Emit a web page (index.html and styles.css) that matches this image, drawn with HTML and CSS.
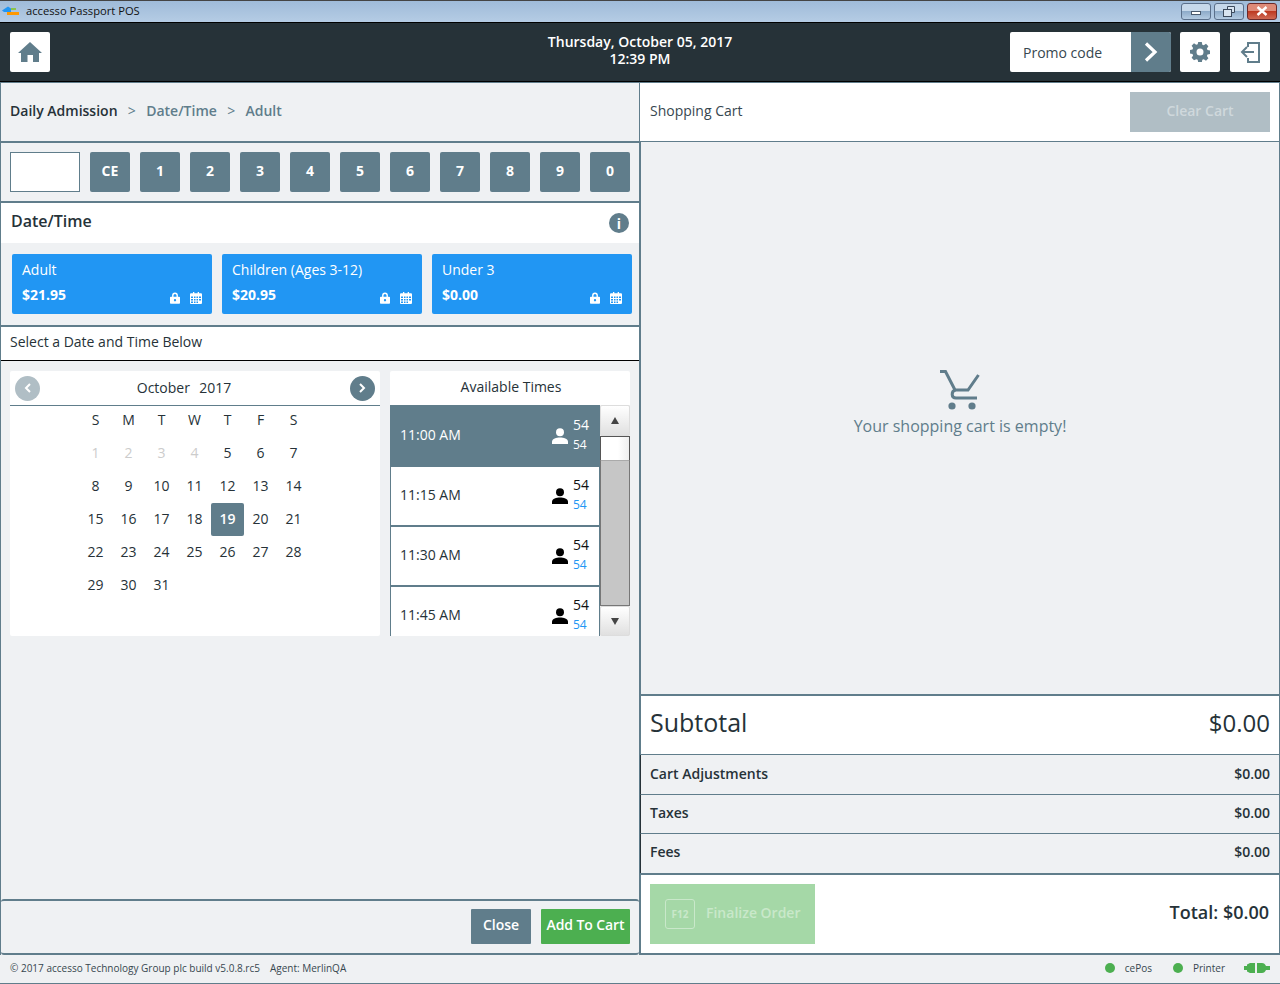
FILE: index.html
```html
<!DOCTYPE html>
<html lang="en">
<head>
    <meta charset="UTF-8">
    <title>accesso Passport POS</title>
    <link rel="stylesheet" href="styles.css">
</head>
<body>
    <svg class="defs" width="0" height="0">
        <symbol id="lock" viewBox="0 0 12 14"><path fill-rule="evenodd" d="M2.500 5.500V4a3.500 3.500 0 0 1 7 0v1.500H11a1 1 0 0 1 1 1V13a1 1 0 0 1-1 1H1a1 1 0 0 1-1-1V6.500a1 1 0 0 1 1-1zM4.200 5.500h3.600V4a1.800 1.800 0 0 0-3.600 0zM6 8.300a1.400 1.400 0 1 0 0 2.800 1.400 1.400 0 0 0 0-2.800z"/></symbol>
        <symbol id="cal" viewBox="0 0 12 12"><path fill-rule="evenodd" d="M3 0h1.300v1.300h3.400V0H9v1.300h2a1 1 0 0 1 1 1V11a1 1 0 0 1-1 1H1a1 1 0 0 1-1-1V2.300a1 1 0 0 1 1-1h2zM1 4.500v1.500h2V4.500zM4 4.500v1.500h1.500V4.500zM6.500 4.500v1.500H8V4.500zM9 4.500v1.500h2V4.500zM1 7v1.500h2V7zM4 7v1.500h1.500V7zM6.500 7v1.500H8V7zM9 7v1.500h2V7zM1 9.500V11h2V9.500zM4 9.500V11h1.500V9.500zM6.500 9.500V11H8V9.500z"/></symbol>
        <symbol id="person" viewBox="0 0 16 16"><circle cx="8" cy="4.200" r="4"/><path d="M0 16v-2.200C0 10.800 4.500 9.500 8 9.500s8 1.300 8 4.300V16z"/></symbol>
    </svg>

    <div class="titlebar">
        <svg class="app-logo" width="18" height="10" viewBox="0 0 18 10">
            <path fill="#2196f3" d="M0 4.500 3 2.500 6 0.500 9 2.500 9 6 2 6z"/>
            <rect x="9" y="2" width="5" height="2" fill="#8bc34a"/>
            <rect x="5" y="6" width="12" height="3" fill="#ff9800"/>
        </svg>
        <span class="app-name">accesso Passport POS</span>
        <div class="win-buttons">
            <span class="win-btn"><i class="win-min"></i></span>
            <span class="win-btn">
                <svg width="12" height="11" viewBox="0 0 12 11"><path d="M4.500 3V.5h7v6H8.500" fill="#d8e4f0" stroke="#3c4a5c"/><rect x=".5" y="3.500" width="8" height="7" fill="#d8e4f0" stroke="#3c4a5c"/></svg>
            </span>
            <span class="win-btn win-close">
                <svg width="12" height="10" viewBox="0 0 12 10"><path d="M1.500 1 10.500 9M10.500 1 1.500 9" stroke="#fff" stroke-width="2.400"/></svg>
            </span>
        </div>
    </div>

    <header class="topbar">
        <div class="top-side">
            <button class="icon-btn">
                <svg width="24" height="20" viewBox="0 0 24 20"><path fill="#607d8b" d="M12 0 24 11h-3v9h-6v-7H9.500v7H3v-9H0z"/></svg>
            </button>
        </div>
        <div class="clock">
            <div>Thursday, October 05, 2017</div>
            <div>12:39 PM</div>
        </div>
        <div class="top-side top-side-right">
            <div class="promo">
                <span class="promo-text">Promo code</span>
                <span class="promo-go">
                    <svg width="14" height="20" viewBox="0 0 14 20"><path d="M2 1.500 11 10 2 18.500" fill="none" stroke="#fff" stroke-width="3.200"/></svg>
                </span>
            </div>
            <button class="icon-btn gear-btn">
                <svg width="20" height="20" viewBox="0 0 20 20"><path fill="#607d8b" fill-rule="evenodd" d="M8.200 0h3.600l.5 2.700 1.500.6L16 1.800l2.400 2.500-1.500 2.200.6 1.500 2.500.5v3.500l-2.500.5-.6 1.500 1.500 2.200-2.400 2.500-2.200-1.500-1.500.6-.5 2.700H8.200l-.5-2.700-1.500-.6L4 18.200l-2.400-2.500 1.500-2.200-.6-1.500L0 11.500V8l2.500-.5.600-1.500-1.500-2.200L4 1.300l2.200 1.500 1.500-.6zM10 6.500a3.500 3.500 0 1 0 0 7 3.500 3.500 0 0 0 0-7z"/></svg>
            </button>
            <button class="icon-btn">
                <svg width="22" height="22" viewBox="0 0 22 22"><path d="M9 6V2h11v19H9v-4" fill="none" stroke="#607d8b" stroke-width="2"/><path d="M15 11H3M8 6l-5 5 5 5" fill="none" stroke="#607d8b" stroke-width="2"/></svg>
            </button>
        </div>
    </header>

    <div class="columns">
        <main class="left">
            <nav class="crumbs">
                <b>Daily Admission</b>
                <span class="sep">&gt;</span>
                <span>Date/Time</span>
                <span class="sep">&gt;</span>
                <span>Adult</span>
            </nav>

            <div class="keypad">
                <input class="qty" type="text">
                <button>CE</button>
                <button>1</button>
                <button>2</button>
                <button>3</button>
                <button>4</button>
                <button>5</button>
                <button>6</button>
                <button>7</button>
                <button>8</button>
                <button>9</button>
                <button>0</button>
            </div>

            <div class="section-head">
                <h2>Date/Time</h2>
                <span class="info">i</span>
            </div>

            <div class="tickets">
                <div class="ticket">
                    <div class="ticket-name">Adult</div>
                    <div class="ticket-row">
                        <b>$21.95</b>
                        <svg class="ic-lock"><use href="#lock"/></svg>
                        <svg class="ic-cal"><use href="#cal"/></svg>
                    </div>
                </div>
                <div class="ticket">
                    <div class="ticket-name">Children (Ages 3-12)</div>
                    <div class="ticket-row">
                        <b>$20.95</b>
                        <svg class="ic-lock"><use href="#lock"/></svg>
                        <svg class="ic-cal"><use href="#cal"/></svg>
                    </div>
                </div>
                <div class="ticket">
                    <div class="ticket-name">Under 3</div>
                    <div class="ticket-row">
                        <b>$0.00</b>
                        <svg class="ic-lock"><use href="#lock"/></svg>
                        <svg class="ic-cal"><use href="#cal"/></svg>
                    </div>
                </div>
            </div>

            <div class="prompt">Select a Date and Time Below</div>

            <div class="picker">
                <section class="calendar">
                    <div class="cal-head">
                        <span class="cal-nav off">
                            <svg width="8" height="10" viewBox="0 0 8 10"><path d="M6 1 2 5l4 4" fill="none" stroke="#fff" stroke-width="2"/></svg>
                        </span>
                        <span class="cal-title">October&nbsp; 2017</span>
                        <span class="cal-nav">
                            <svg width="8" height="10" viewBox="0 0 8 10"><path d="M2 1l4 4-4 4" fill="none" stroke="#fff" stroke-width="2"/></svg>
                        </span>
                    </div>
                    <div class="cal-grid">
                        <span>S</span><span>M</span><span>T</span><span>W</span><span>T</span><span>F</span><span>S</span>
                        <span class="past">1</span><span class="past">2</span><span class="past">3</span><span class="past">4</span><span>5</span><span>6</span><span>7</span>
                        <span>8</span><span>9</span><span>10</span><span>11</span><span>12</span><span>13</span><span>14</span>
                        <span>15</span><span>16</span><span>17</span><span>18</span><span class="today">19</span><span>20</span><span>21</span>
                        <span>22</span><span>23</span><span>24</span><span>25</span><span>26</span><span>27</span><span>28</span>
                        <span>29</span><span>30</span><span>31</span>
                    </div>
                </section>

                <section class="times">
                    <div class="times-head">Available Times</div>
                    <div class="times-body">
                        <div class="time-list">
                            <div class="slot active">
                                <span class="slot-time">11:00 AM</span>
                                <svg class="ic-person"><use href="#person"/></svg>
                                <span class="slot-nums"><span>54</span><span class="avail">54</span></span>
                            </div>
                            <div class="slot">
                                <span class="slot-time">11:15 AM</span>
                                <svg class="ic-person"><use href="#person"/></svg>
                                <span class="slot-nums"><span>54</span><span class="avail">54</span></span>
                            </div>
                            <div class="slot">
                                <span class="slot-time">11:30 AM</span>
                                <svg class="ic-person"><use href="#person"/></svg>
                                <span class="slot-nums"><span>54</span><span class="avail">54</span></span>
                            </div>
                            <div class="slot">
                                <span class="slot-time">11:45 AM</span>
                                <svg class="ic-person"><use href="#person"/></svg>
                                <span class="slot-nums"><span>54</span><span class="avail">54</span></span>
                            </div>
                        </div>
                        <div class="scroll">
                            <div class="scroll-btn"><i class="arrow-up"></i></div>
                            <div class="scroll-thumb"></div>
                            <div class="scroll-track"></div>
                            <div class="scroll-btn scroll-btn-down"><i class="arrow-down"></i></div>
                        </div>
                    </div>
                </section>
            </div>

            <div class="actions">
                <button class="btn-close">Close</button>
                <button class="btn-add">Add To Cart</button>
            </div>
        </main>

        <aside class="right">
            <div class="cart-head">
                <span>Shopping Cart</span>
                <button class="btn-clear">Clear Cart</button>
            </div>

            <div class="cart-empty">
                <svg width="42" height="41" viewBox="0 0 42 41">
                    <path d="M1 2.500h5.500L16 21h13l10.500-15" fill="none" stroke="#607d8b" stroke-width="3"/>
                    <path d="M38 29H17c-5 0-5-7-.5-8" fill="none" stroke="#607d8b" stroke-width="3"/>
                    <circle cx="13" cy="37" r="3.600" fill="#607d8b"/>
                    <circle cx="33" cy="37" r="3.600" fill="#607d8b"/>
                </svg>
                <div class="empty-text">Your shopping cart is empty!</div>
            </div>

            <div class="subtotal"><span class="sub-label">Subtotal</span><span>$0.00</span></div>
            <div class="sum-row sum-first"><span>Cart Adjustments</span><span class="sum-val">$0.00</span></div>
            <div class="sum-row"><span>Taxes</span><span class="sum-val">$0.00</span></div>
            <div class="sum-row sum-last"><span>Fees</span><span class="sum-val">$0.00</span></div>

            <div class="total-row">
                <button class="btn-finalize"><span class="key">F12</span>Finalize Order</button>
                <span class="total">Total: $0.00</span>
            </div>
        </aside>
    </div>

    <footer class="status">
        <span>© 2017 accesso Technology Group plc build v5.0.8.rc5</span>
        <span class="agent">Agent: MerlinQA</span>
        <div class="status-right">
            <i class="dot"></i><span class="dot-label">cePos</span>
            <i class="dot"></i><span class="dot-label">Printer</span>
            <svg class="plug" width="26" height="10" viewBox="0 0 26 10">
                <path fill="#4caf50" d="M0 3h3V1.500L6 0h5v10H6L3 8.500V7H0zM13 0h5c2 0 3 1 4 3h4v4h-4c-1 2-2 3-4 3h-5z"/>
            </svg>
        </div>
    </footer>
</body>
</html>
```
FILE: styles.css
```css
*{
    box-sizing: border-box;
    padding: 0px;
    margin: 0px;
}

html{
    font-family: "Open Sans", "Noto Sans", sans-serif;
}

body{
    display: flex;
    flex-direction: column;
    width: 1280px;
    height: 984px;
    overflow: hidden;
    background-color: #eff1f3;
    color: #263238;
    font-size: 14px;
}

button{
    font-family: inherit;
    border: none;
}

.defs{
    position: absolute;
}

/* window chrome */
.titlebar{
    display: flex;
    align-items: center;
    height: 23px;
    flex-shrink: 0;
    padding: 0 3px 1px 2px;
    background: linear-gradient(to bottom, #9fbbd9, #b5cce4);
    border-top: 1px solid #444;
    border-bottom: 1px solid #000;
}

.app-logo{
    margin-right: 6px;
}

.app-name{
    margin-top: -2px;
    font-size: 11.2px;
    color: #111;
}

.win-buttons{
    display: flex;
    gap: 3px;
    margin-left: auto;
}

.win-btn{
    display: flex;
    align-items: center;
    justify-content: center;
    width: 30px;
    height: 17px;
    border: 1px solid #5a6f8a;
    border-radius: 3px;
    background: linear-gradient(to bottom, #c6d8ea 50%, #8eabc9 50%, #b4cbe2);
}

.win-close{
    border-color: #6b2a2a;
    background: linear-gradient(to bottom, #dd8a78 50%, #bd3a22 50%, #cf6a54);
}

.win-min{
    display: block;
    width: 10px;
    height: 4px;
    margin-top: 4px;
    background-color: #fff;
    border: 1px solid #4a5a6e;
}

/* top bar */
.topbar{
    display: flex;
    align-items: center;
    height: 59px;
    flex-shrink: 0;
    padding: 0 10px;
    background-color: #263238;
    border-bottom: 1px solid #000;
}

.top-side{
    display: flex;
    flex: 1;
}

.top-side-right{
    justify-content: flex-end;
}

.icon-btn{
    display: flex;
    align-items: center;
    justify-content: center;
    width: 40px;
    height: 40px;
    background-color: #fff;
    border-radius: 2px;
}

.gear-btn{
    margin: 0 10px 0 9px;
}

.clock{
    margin-bottom: 4px;
    text-align: center;
    color: #fff;
    font-size: 14px;
    font-weight: 600;
    line-height: 17px;
}

.promo{
    display: flex;
    width: 161px;
    height: 40px;
    background-color: #fff;
    border-radius: 2px;
    overflow: hidden;
}

.promo-text{
    flex: 1;
    padding-left: 13px;
    line-height: 41px;
    font-size: 14px;
    color: #37474f;
}

.promo-go{
    display: flex;
    align-items: center;
    justify-content: center;
    width: 40px;
    background-color: #607d8b;
}

/* two panes */
.columns{
    display: flex;
    flex: 1;
    min-height: 0;
}

.left{
    display: flex;
    flex-direction: column;
    width: 640px;
    border-left: 1px solid #607d8b;
    border-right: 1px solid #607d8b;
    background-color: #eff1f3;
}

.right{
    display: flex;
    flex-direction: column;
    width: 640px;
    border-right: 1px solid #607d8b;
}

.crumbs{
    display: flex;
    align-items: center;
    gap: 10.3px;
    height: 61px;
    flex-shrink: 0;
    padding: 0 0 3px 9px;
    border-top: 1px solid #607d8b;
    border-bottom: 2px solid #607d8b;
    color: #607d8b;
    font-weight: 600;
    font-size: 14px;
}

.crumbs b{
    font-weight: 600;
    color: #263238;
}

.crumbs .sep{
    font-weight: 400;
    font-size: 14px;
}

.keypad{
    display: flex;
    gap: 10px;
    height: 60px;
    flex-shrink: 0;
    padding: 9px 9px;
    border-bottom: 2px solid #607d8b;
}

.keypad button{
    width: 40px;
    height: 40px;
    padding-bottom: 4px;
    background-color: #607d8b;
    color: #fff;
    font-size: 14px;
    font-weight: 700;
    border-radius: 2px;
}

.qty{
    width: 70px;
    height: 40px;
    background-color: #fff;
    border: 1px solid #607d8b;
}

.section-head{
    display: flex;
    align-items: center;
    justify-content: space-between;
    height: 40px;
    flex-shrink: 0;
    padding: 0 10px;
    background-color: #fff;
}

.section-head h2{
    margin-top: -5px;
    font-size: 16px;
    font-weight: 600;
    color: #263238;
}

.info{
    display: flex;
    align-items: center;
    justify-content: center;
    width: 20px;
    height: 20px;
    border-radius: 50%;
    background-color: #607d8b;
    color: #fff;
    font-size: 14px;
    font-weight: 700;
}

.tickets{
    display: flex;
    gap: 10px;
    height: 84px;
    flex-shrink: 0;
    padding: 11px 0 0 11px;
    border-bottom: 2px solid #607d8b;
}

.ticket{
    width: 200px;
    height: 60px;
    padding: 6px 10px 0;
    background-color: #2196f3;
    border-radius: 2px;
    color: #fff;
}

.ticket-name{
    font-size: 14px;
    line-height: 20px;
}

.ticket-row{
    display: flex;
    align-items: center;
    margin-top: 4px;
    height: 21px;
}

.ticket-row b{
    flex: 1;
    font-size: 14px;
    font-weight: 700;
}

.ic-lock{
    width: 10px;
    height: 12px;
    margin-top: 7px;
    fill: #fff;
}

.ic-cal{
    width: 12px;
    height: 12px;
    margin: 7px 0 0 10px;
    fill: #fff;
}

.prompt{
    height: 34px;
    flex-shrink: 0;
    padding-left: 9px;
    line-height: 30px;
    background-color: #fff;
    border-bottom: 1px solid #000;
    font-size: 14px;
    color: #263238;
}

.picker{
    display: flex;
    gap: 10px;
    flex: 1;
    padding: 10px 9px 0;
}

.calendar{
    width: 370px;
    height: 265px;
    background-color: #fff;
    border-radius: 2px;
}

.cal-head{
    display: flex;
    align-items: center;
    justify-content: space-between;
    height: 35px;
    padding: 0 5px 0 5px;
    border-bottom: 1px solid #607d8b;
}

.cal-title{
    margin: 0 22px 2px 0;
    font-size: 14px;
    word-spacing: 1px;
    color: #263238;
}

.cal-nav{
    display: flex;
    align-items: center;
    justify-content: center;
    width: 25px;
    height: 25px;
    border-radius: 50%;
    background-color: #607d8b;
}

.cal-nav.off{
    background-color: #b0bec5;
}

.cal-grid{
    display: grid;
    grid-template-columns: repeat(7, 33px);
    grid-auto-rows: 33px;
    justify-content: center;
    margin-top: -2px;
    padding-right: 1px;
    font-size: 14px;
    color: #263238;
}

.cal-grid span{
    display: flex;
    align-items: center;
    justify-content: center;
    padding-bottom: 2px;
}

.cal-grid .past{
    color: #ccc;
}

.cal-grid .today{
    background-color: #607d8b;
    color: #fff;
    font-weight: 600;
    border-radius: 2px;
}

.times{
    width: 240px;
    height: 265px;
    background-color: #fff;
    border-radius: 2px;
}

.times-head{
    height: 34px;
    line-height: 31px;
    padding-left: 2px;
    text-align: center;
    font-size: 14px;
    color: #263238;
}

.times-body{
    display: flex;
    height: 231px;
}

.time-list{
    width: 210px;
    overflow: hidden;
    border-left: 1px solid #607d8b;
    border-right: 1px solid #607d8b;
}

.slot{
    display: flex;
    align-items: center;
    height: 60px;
    flex-shrink: 0;
    padding: 0 10px 4px 9px;
    border-bottom: 2px solid #607d8b;
    color: #111;
}

.slot.active{
    height: 62px;
    background-color: #607d8b;
    border-bottom: none;
    color: #fff;
}

.slot-time{
    flex: 1;
    font-size: 14px;
    color: #263238;
}

.slot.active .slot-time{
    color: #fff;
}

.ic-person{
    width: 16px;
    height: 16px;
    margin: 3px 5px 0 0;
    fill: #000;
}

.slot.active .ic-person{
    fill: #fff;
}

.slot-nums{
    display: flex;
    flex-direction: column;
    width: 16px;
    margin-top: 2px;
    font-size: 14px;
    line-height: 20px;
}

.avail{
    font-size: 12px;
    color: #2196f3;
}

.slot.active .avail{
    color: #fff;
}

.scroll{
    display: flex;
    flex-direction: column;
    width: 30px;
    background-color: #f0f0f0;
}

.scroll-btn{
    display: flex;
    align-items: center;
    justify-content: center;
    height: 31px;
    background: linear-gradient(to bottom, #fff, #e0e0e0);
    border: 1px solid #ddd;
    border-radius: 2px;
}

.scroll-btn-down{
    height: 30px;
}

.arrow-up{
    border-left: 4px solid transparent;
    border-right: 4px solid transparent;
    border-bottom: 7px solid #444;
}

.arrow-down{
    border-left: 4px solid transparent;
    border-right: 4px solid transparent;
    border-top: 7px solid #444;
}

.scroll-thumb{
    height: 25px;
    background: linear-gradient(to right, #fff 60%, #eee);
    border: 1px solid #555;
    border-bottom: 1px solid #aaa;
}

.scroll-track{
    flex: 1;
    background-color: #c6c6c6;
    border-left: 1px solid #777;
    border-right: 1px solid #777;
    border-bottom: 1px solid #777;
}

.actions{
    display: flex;
    align-items: center;
    justify-content: flex-end;
    gap: 10px;
    height: 56px;
    flex-shrink: 0;
    padding: 0 9px 1px 0;
    border-top: 2px solid #607d8b;
    border-bottom: 2px solid #607d8b;
    border-radius: 3px;
}

.actions button{
    height: 35px;
    padding-bottom: 5px;
    color: #fff;
    font-size: 14px;
    font-weight: 600;
    border-radius: 1px;
}

.btn-close{
    width: 60px;
    background-color: #607d8b;
}

.btn-add{
    width: 89px;
    letter-spacing: -0.1px;
    background-color: #4caf50;
}

/* cart */
.cart-head{
    display: flex;
    align-items: center;
    justify-content: space-between;
    height: 60px;
    flex-shrink: 0;
    padding: 0 9px 1px 10px;
    background-color: #fff;
    border-top: 1px solid #607d8b;
    border-bottom: 1px solid #607d8b;
    font-size: 14px;
    color: #37474f;
}

.cart-head span{
    margin-top: -2px;
}

.btn-clear{
    width: 140px;
    height: 40px;
    padding-bottom: 2px;
    background-color: #b0bec5;
    color: #cfd8dc;
    font-size: 14px;
    font-weight: 600;
}

.cart-empty{
    display: flex;
    flex-direction: column;
    align-items: center;
    flex: 1;
    min-height: 0;
    padding-top: 227px;
    color: #607d8b;
    font-size: 16px;
    line-height: 22px;
    border-left: 1px solid #607d8b;
}

.empty-text{
    margin-top: 5px;
}

.subtotal{
    display: flex;
    align-items: center;
    justify-content: space-between;
    height: 61px;
    flex-shrink: 0;
    padding: 0 9px 6px;
    background-color: #fff;
    border-top: 2px solid #607d8b;
    border-left: 1px solid #607d8b;
    border-bottom: 1px solid #607d8b;
    font-size: 24px;
    color: #263238;
}

.sub-label{
    font-size: 25px;
}

.sum-row{
    display: flex;
    align-items: center;
    justify-content: space-between;
    height: 39px;
    flex-shrink: 0;
    padding: 0 9px 4px;
    border-left: 1px solid #263238;
    border-bottom: 1px solid #607d8b;
    font-size: 14px;
    font-weight: 600;
    color: #263238;
}

.sum-first{
    height: 40px;
    padding-bottom: 2px;
}

.sum-last{
    border-bottom: none;
}

.sum-val{
    font-size: 14px;
}

.total-row{
    display: flex;
    align-items: center;
    justify-content: space-between;
    height: 82px;
    flex-shrink: 0;
    padding: 0 10px 0 9px;
    background-color: #fff;
    border-top: 2px solid #607d8b;
    border-left: 1px solid #607d8b;
    border-bottom: 2px solid #607d8b;
}

.btn-finalize{
    display: flex;
    align-items: center;
    gap: 11px;
    width: 165px;
    height: 60px;
    padding: 0 0 4px 15px;
    background-color: #a5d8a7;
    color: #c9e8ca;
    font-size: 14px;
    font-weight: 600;
}

.key{
    display: flex;
    align-items: center;
    justify-content: center;
    width: 30px;
    height: 30px;
    margin-top: 4px;
    border: 1px solid #c9e8ca;
    border-radius: 3px;
    font-size: 10px;
    font-weight: 700;
}

.total{
    margin-bottom: 5px;
    font-size: 18px;
    font-weight: 600;
    color: #263238;
}

/* status bar */
.status{
    display: flex;
    align-items: center;
    height: 29px;
    flex-shrink: 0;
    padding: 0 10px 2px 10px;
    border-bottom: 1px solid #607d8b;
    font-size: 10px;
    color: #37474f;
}

.agent{
    margin-left: 10px;
}

.status-right{
    display: flex;
    align-items: center;
    margin-left: auto;
}

.dot{
    width: 10px;
    height: 10px;
    border-radius: 50%;
    background-color: #4caf50;
}

.dot-label{
    margin: 0 21px 0 10px;
}

.plug{
    margin-left: -2px;
}
```
